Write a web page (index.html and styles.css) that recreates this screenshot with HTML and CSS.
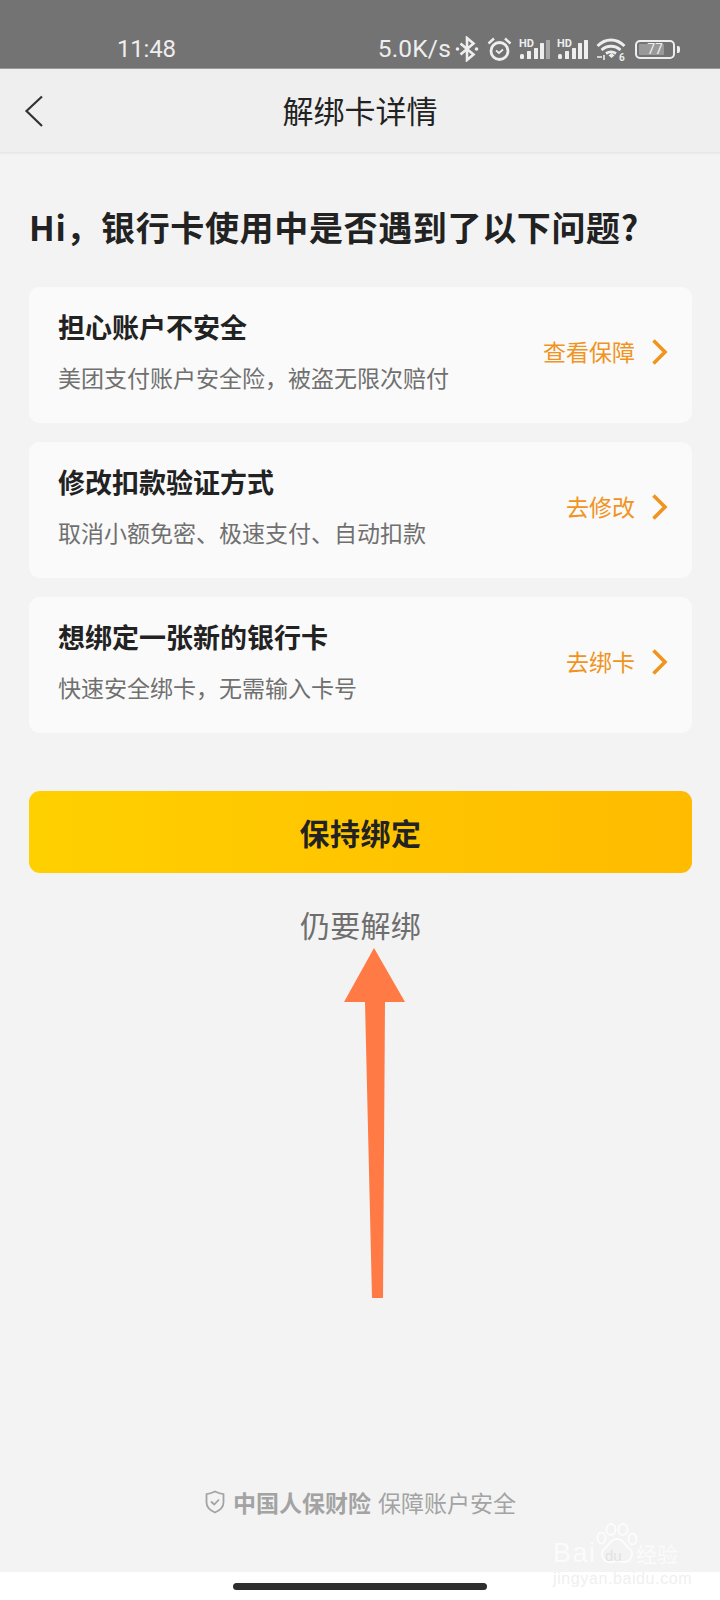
FILE: index.html
```html
<!DOCTYPE html>
<html lang="zh-CN">
<head>
<meta charset="utf-8">
<title>解绑卡详情</title>
<link rel="stylesheet" href="styles.css">
</head>
<body>
<div class="phone">
  <div class="status">
    <span class="time">11:48</span>
    <div class="status-right">
      <span class="speed">5.0K/s</span>
      <svg class="ic bt" width="24" height="26" viewBox="0 0 24 26" fill="none" stroke="#eee" stroke-width="2.600"><path d="M5.500 7.500l13 11-6.500 5.500V2l6.500 5.500-13 11"/><circle cx="2.500" cy="13" r="1.800" fill="#eee" stroke="none"/><circle cx="21.500" cy="13" r="1.800" fill="#eee" stroke="none"/></svg>
      <svg class="ic alarm" width="25" height="24" viewBox="0 0 25 24" fill="none" stroke="#eee" stroke-width="2.800"><circle cx="12.500" cy="14" r="8.500"/><path d="M9 13.500l3 2.500 4-3.500" stroke-width="1.800"/><path d="M1.500 6.500l5.500-5M23.500 6.500l-5.500-5" stroke-width="2.400"/></svg>
      <svg class="ic sig" width="31" height="24" viewBox="0 -2 31 24" fill="#eee"><text x="0" y="8" class="hd">HD</text><rect x="1" y="15" width="4" height="5" rx="1.500"/><rect x="8" y="12" width="4" height="8" rx=".5"/><rect x="15" y="9" width="4" height="11" rx=".5"/><rect x="21" y="4" width="4" height="16" rx=".5"/><rect x="27" y="1" width="4" height="19" fill="#a6a6a6"/></svg>
      <svg class="ic sig" width="31" height="24" viewBox="0 -2 31 24" fill="#eee"><text x="0" y="8" class="hd">HD</text><rect x="1" y="15" width="4" height="5" rx="1.500"/><rect x="8" y="12" width="4" height="8" rx=".5"/><rect x="15" y="9" width="4" height="11" rx=".5"/><rect x="21" y="4" width="4" height="16" rx=".5"/><rect x="27" y="1" width="4" height="19" rx=".5"/></svg>
      <svg class="ic wifi" width="30" height="28" viewBox="0 -2.500 30 28" fill="none" stroke="#eee" stroke-width="2.800"><path d="M1.500 8.500c8-8 19-8 27 0M5.500 12.500c5.500-5 13.500-5 19 0M10 16c3-2 7-2 10 0"/><path d="M12.500 18l3-2.500 3 2.500-3 2.500z" fill="#eee" stroke="none"/><path d="M1 19.500h5M8 17.500v5" stroke-width="1.600"/><text x="23" y="23" class="six" fill="#eee" stroke="none">6</text></svg>
      <div class="battery"><div class="batt-box"><span class="batt-fill"></span><span class="batt-num">77</span></div><span class="batt-tip"></span></div>
    </div>
  </div>
  <header class="nav">
    <svg class="back" width="20" height="32" viewBox="0 0 20 32" fill="none" stroke="#333" stroke-width="2.200"><path d="M18 1.500L2.500 16 18 31"/></svg>
    <h1 class="nav-title">解绑卡详情</h1>
  </header>
  <main class="content">
    <h2 class="headline">Hi，银行卡使用中是否遇到了以下问题?</h2>
    <section class="card">
      <div class="card-text"><h3 class="card-title">担心账户不安全</h3><p class="card-desc">美团支付账户安全险，被盗无限次赔付</p></div>
      <div class="card-action"><span class="action-label">查看保障</span><svg class="chev" width="17" height="26" viewBox="0 0 17 26" fill="none" stroke="#f0941f" stroke-width="3.600"><path d="M2.500 1.500L14 13 2.500 24.500"/></svg></div>
    </section>
    <section class="card">
      <div class="card-text"><h3 class="card-title">修改扣款验证方式</h3><p class="card-desc">取消小额免密、极速支付、自动扣款</p></div>
      <div class="card-action"><span class="action-label">去修改</span><svg class="chev" width="17" height="26" viewBox="0 0 17 26" fill="none" stroke="#f0941f" stroke-width="3.600"><path d="M2.500 1.500L14 13 2.500 24.500"/></svg></div>
    </section>
    <section class="card">
      <div class="card-text"><h3 class="card-title">想绑定一张新的银行卡</h3><p class="card-desc">快速安全绑卡，无需输入卡号</p></div>
      <div class="card-action"><span class="action-label">去绑卡</span><svg class="chev" width="17" height="26" viewBox="0 0 17 26" fill="none" stroke="#f0941f" stroke-width="3.600"><path d="M2.500 1.500L14 13 2.500 24.500"/></svg></div>
    </section>
    <button class="keep">保持绑定</button>
    <div class="unbind">仍要解绑</div>
    <div class="spacer"></div>
    <footer class="foot">
      <svg width="20" height="24" viewBox="0 0 20 24" fill="none" stroke="#a3a3a3" stroke-width="1.800"><path d="M10 1.500c3 1.500 5 2.300 8.500 2.700v8.300c0 4.500-3.500 7.800-8.500 10-5-2.200-8.500-5.500-8.500-10V4.200C5 3.800 7 3 10 1.500z"/><path d="M6 11.500l3.200 3L14 9.500"/></svg>
      <strong>中国人保财险</strong><span>保障账户安全</span>
    </footer>
  </main>
  <div class="home"><span class="home-bar"></span></div>
  <svg class="arrow" width="720" height="1600" viewBox="0 0 720 1600"><path d="M374 948L405 1002H385L383 1298H372L365 1002H344Z" fill="#ff7a45"/></svg>
  <div class="mark">
    <svg class="paw" width="42" height="44" viewBox="0 0 42 44" fill="none" stroke="#fff" stroke-width="2"><ellipse cx="15" cy="6.500" rx="4.500" ry="5.500"/><ellipse cx="27" cy="6.500" rx="4.500" ry="5.500"/><ellipse cx="5.500" cy="15" rx="4" ry="5.500"/><ellipse cx="36.500" cy="16" rx="4" ry="5.500"/><path d="M21 16c6 0 7 5 12 9 6 5 2 15-6 14-4-1-8-1-12 0-8 1-12-9-6-14 5-4 6-9 12-9z"/></svg>
    <span class="mark-du">du</span>
    <span class="mark-bai">Bai</span>
    <span class="mark-cn">经验</span>
    <div class="mark-url">jingyan.baidu.com</div>
  </div>
</div>
</body>
</html>
```

FILE: styles.css
```css
* { box-sizing: border-box; }
html, body { margin: 0; padding: 0; }
body { font-family: "Noto Sans CJK SC", "Noto Sans", sans-serif; background: #fff; }
.phone { position: relative; width: 720px; height: 1600px; overflow: hidden; display: flex; flex-direction: column; }
.status { height: 69px; flex: none; background: #737373; display: flex; align-items: flex-end; justify-content: space-between; padding: 0 40px 3px 117px; color: #eee; border-bottom: 1px solid #999; }
.time { font-family: Roboto, sans-serif; font-size: 24px; line-height: 32px; letter-spacing: -.2px; }
.status-right { display: flex; align-items: center; height: 32px; }
.speed { font-family: Roboto, sans-serif; font-size: 24.500px; line-height: 32px; letter-spacing: .2px; margin-right: 4px; }
.ic { display: block; flex: none; }
.alarm { margin-left: 8px; }
.sig { margin-left: 7px; }
.wifi { margin-left: 8px; }
.hd { font-family: Roboto, sans-serif; font-size: 11px; font-weight: 700; }
.six { font-family: Roboto, sans-serif; font-size: 10px; font-weight: 700; }
.battery { display: flex; align-items: center; margin-left: 9px; gap: 2px; }
.batt-box { position: relative; width: 40px; height: 19px; border: 2px solid #eee; border-radius: 5px; display: flex; align-items: center; justify-content: center; }
.batt-fill { position: absolute; left: 2px; top: 2px; bottom: 2px; width: 25px; background: #999; border-radius: 1px; }
.batt-num { position: relative; font-family: Roboto, sans-serif; font-size: 14px; line-height: 15px; color: #eee; }
.batt-tip { width: 3px; height: 7px; background: #eee; border-radius: 0 2px 2px 0; }
.nav { height: 84px; flex: none; background: #efefef; display: flex; align-items: center; justify-content: center; position: relative; border-bottom: 1px solid #e6e6e6; box-shadow: 0 1px 2px rgba(0,0,0,.04); }
.back { position: absolute; left: 24px; top: 26px; }
.nav-title { margin: 0; font-size: 31px; font-weight: 400; color: #222; line-height: 40px; position: relative; top: -1px; }
.content { flex: 1; background: #f3f3f3; padding: 0 28px 0 29px; display: flex; flex-direction: column; }
.headline { margin: 50px 0 36px; font-size: 34px; font-weight: 700; line-height: 48px; color: #222; letter-spacing: .65px; white-space: nowrap; }
.card { height: 136px; background: #fafafa; border-radius: 11px; margin-bottom: 19px; display: flex; align-items: center; justify-content: space-between; padding: 0 24px 0 29px; }
.card-title { margin: 0 0 17px; font-size: 27px; font-weight: 700; line-height: 34px; color: #222; }
.card-desc { margin: 0; font-size: 23px; line-height: 32px; color: #707070; }
.card-text { position: relative; top: -4px; }
.card-action { display: flex; align-items: center; gap: 16px; color: #f0941f; font-size: 23px; line-height: 30px; }
.action-label { position: relative; top: -4px; }
.chev { display: block; flex: none; position: relative; top: -3px; }
.keep { display: block; width: 100%; height: 82px; margin-top: 39px; border: 0; border-radius: 11px; background: linear-gradient(90deg, #ffd000, #ffbb00); font: 700 30px/40px "Noto Sans CJK SC", sans-serif; color: #222; padding: 0; letter-spacing: .5px; }
.unbind { margin-top: 30px; text-align: center; font-size: 30px; line-height: 42px; color: #6e6e6e; letter-spacing: .2px; }
.spacer { flex: 1; }
.foot { display: flex; align-items: center; justify-content: center; gap: 7px; color: #a3a3a3; font-size: 23px; line-height: 30px; padding-bottom: 55px; }
.foot strong { font-weight: 700; }
.foot svg { margin-right: 1px; }
.home { height: 28px; flex: none; background: #fff; display: flex; justify-content: center; align-items: flex-start; padding-top: 11px; }
.home-bar { width: 254px; height: 7px; border-radius: 4px; background: #2e2e2e; }
.arrow { position: absolute; left: 0; top: 0; pointer-events: none; }
.mark { position: absolute; left: 553px; top: 1523px; width: 130px; height: 66px; color: #fff; }
.paw { position: absolute; left: 43px; top: 0; opacity: .75; }
.mark-bai, .mark-du, .mark-cn { position: absolute; white-space: nowrap; opacity: .7; }
.mark-bai { left: 0; top: 15px; font: 400 27px/30px "Liberation Sans", sans-serif; letter-spacing: 1.5px; color: #fff; }
.mark-du { left: 52px; top: 24px; font: 400 15px/18px "Liberation Sans", sans-serif; color: #dcdcdc; }
.mark-cn { left: 83px; top: 15px; font-size: 21px; line-height: 30px; color: #fff; }
.mark-url { position: absolute; left: 0; top: 47px; font-family: "Liberation Sans", sans-serif; font-size: 16px; line-height: 18px; letter-spacing: .6px; color: #efefef; white-space: nowrap; }
```
